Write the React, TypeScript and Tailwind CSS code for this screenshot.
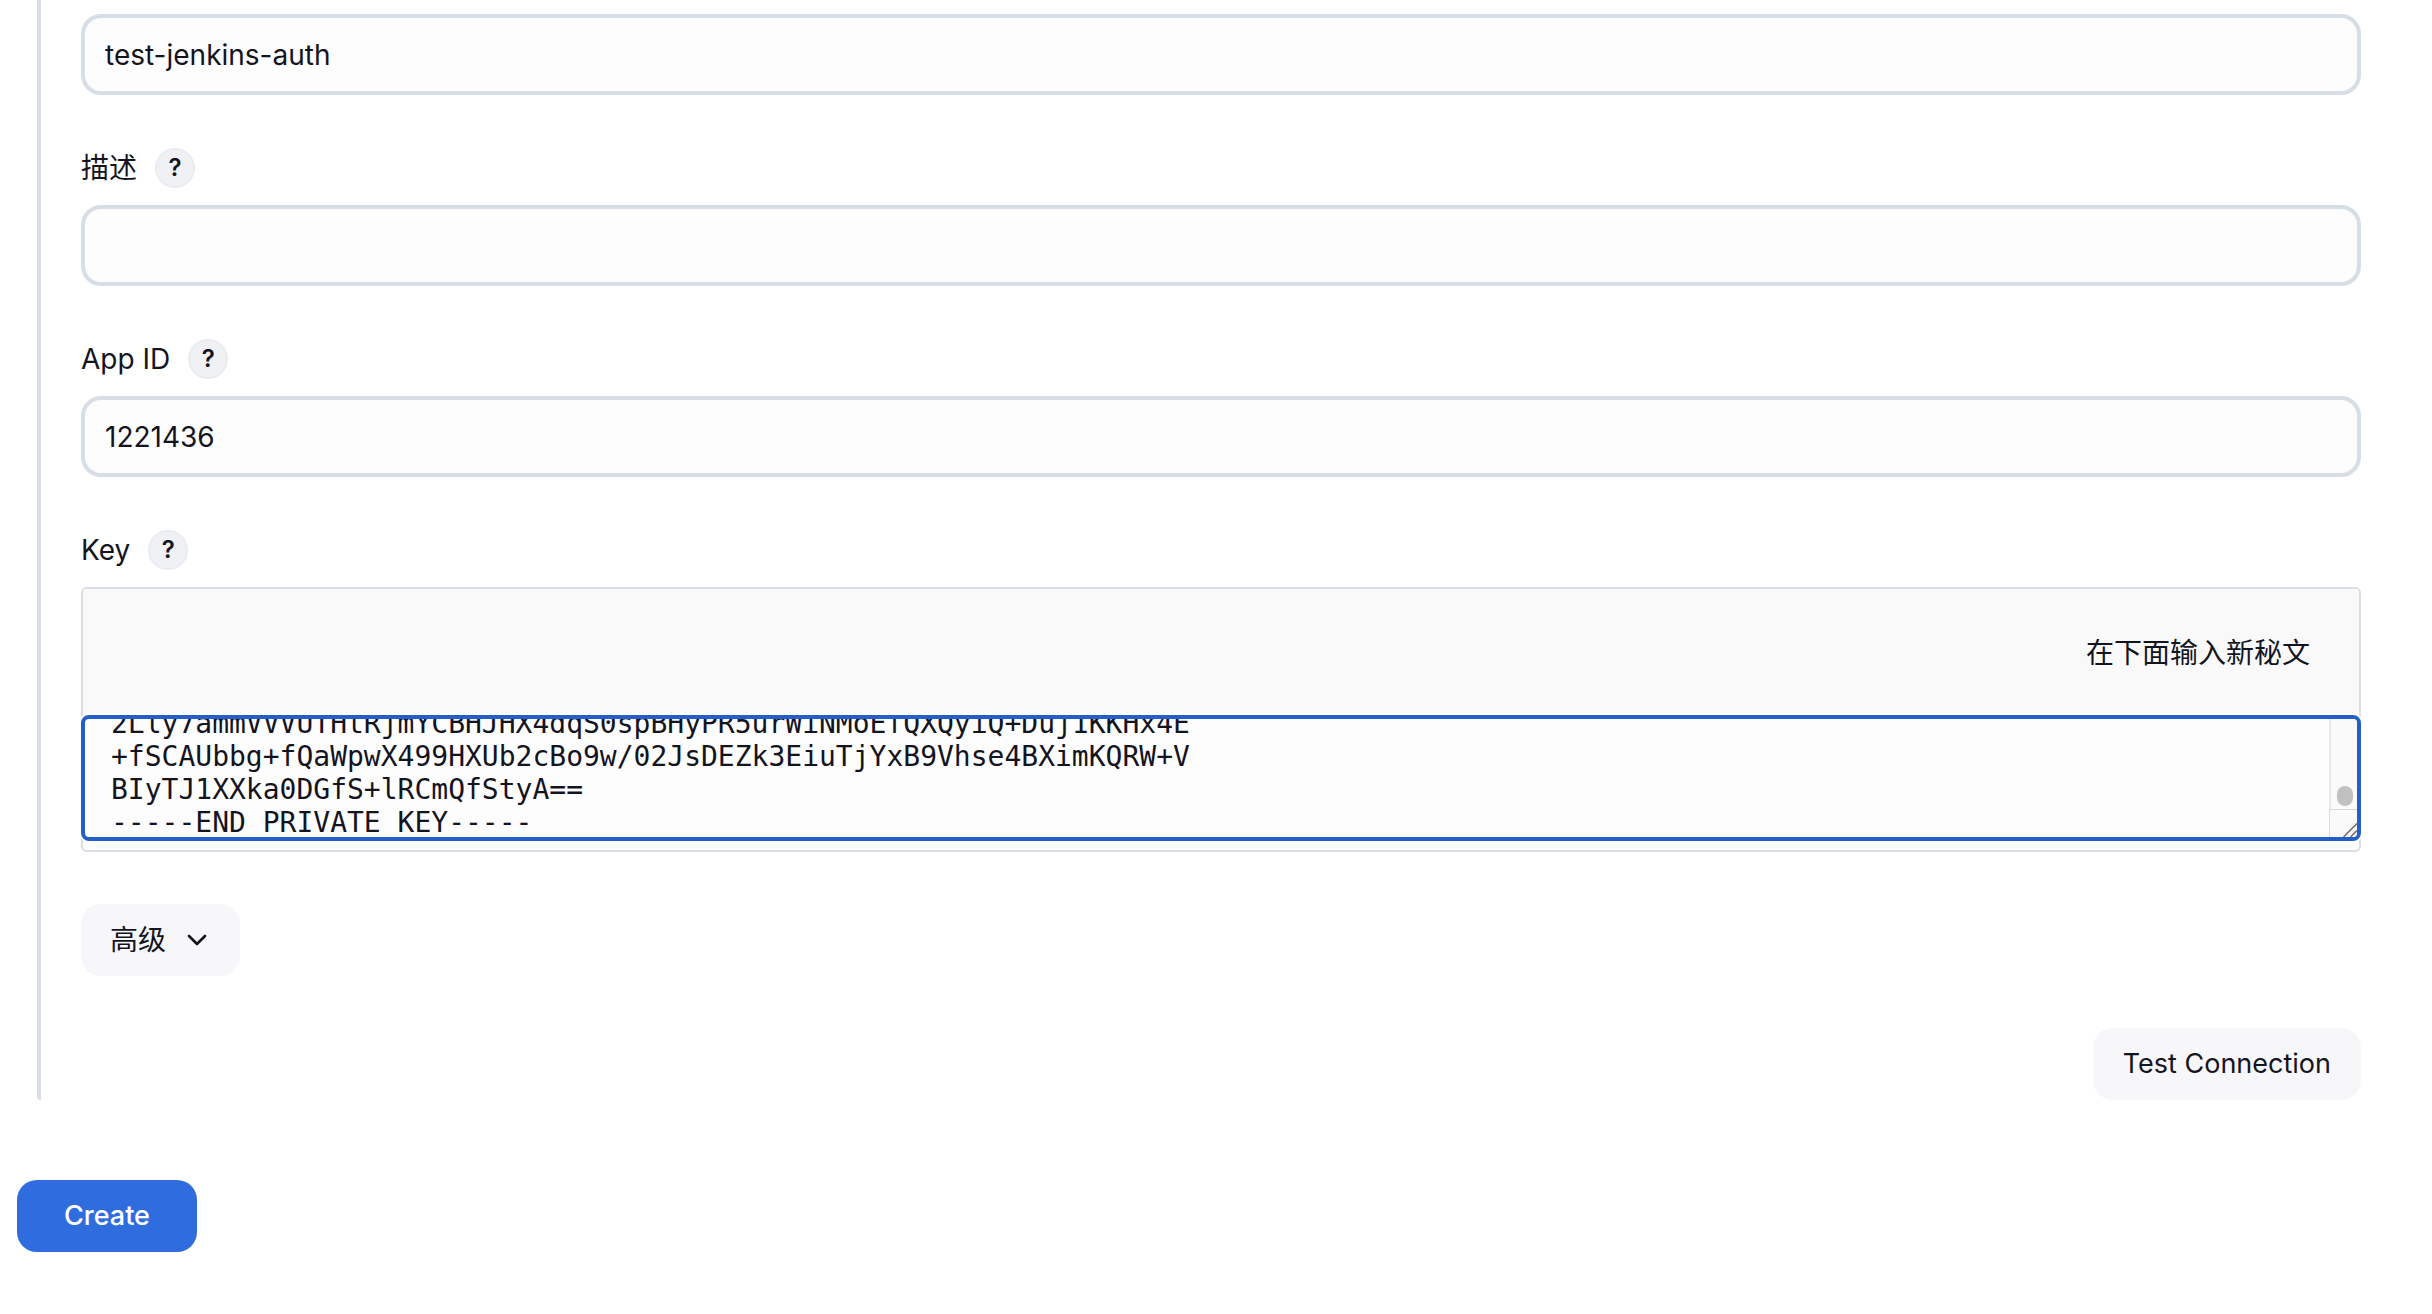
import React, { useEffect, useRef, useState } from 'react';

const PRIVATE_KEY = [
  '2Lly7ammVVVUTHtRjmYCBHJHX4dqS0spBHyPR5urWiNMoEfQXQyiQ+Duj1KKHx4E',
  '+fSCAUbbg+fQaWpwX499HXUb2cBo9w/02JsDEZk3EiuTjYxB9Vhse4BXimKQRW+V',
  'BIyTJ1XXka0DGfS+lRCmQfStyA==',
  '-----END PRIVATE KEY-----',
].join('\n');

interface FieldLabelProps {
  htmlFor: string;
  children: React.ReactNode;
}

const FieldLabel: React.FC<FieldLabelProps> = ({ htmlFor, children }) => (
  <div className="flex items-center gap-[18px] mb-[17px]">
    <label htmlFor={htmlFor}>{children}</label>
    <button
      type="button"
      aria-label="Help"
      className="size-10 rounded-full border-2 border-[#e9ecf1] bg-[#f0f1f5] flex items-center justify-center text-2xl leading-none font-semibold"
    >
      ?
    </button>
  </div>
);

interface TextFieldProps {
  id: string;
  label?: string;
  initialValue: string;
}

const TextField: React.FC<TextFieldProps> = ({ id, label, initialValue }) => {
  const [value, setValue] = useState(initialValue);

  return (
    <div>
      {label && <FieldLabel htmlFor={id}>{label}</FieldLabel>}
      <input
        id={id}
        type="text"
        aria-label={label ? undefined : 'ID'}
        value={value}
        onChange={(e) => setValue(e.target.value)}
        className="block w-full h-[81px] rounded-[20px] border-4 border-[#d8dee6] bg-[#fdfdfd] px-5 outline-none focus:border-[#265ec9]"
      />
    </div>
  );
};

const SecretField: React.FC = () => {
  const [value, setValue] = useState(PRIVATE_KEY);
  const textareaRef = useRef<HTMLTextAreaElement>(null);

  useEffect(() => {
    // Keep the end of the key in view
    if (textareaRef.current) {
      textareaRef.current.scrollTop = 12;
    }
  }, []);

  return (
    <div>
      <FieldLabel htmlFor="key">Key</FieldLabel>
      <div className="rounded-md border-2 border-[#d8dde6] pb-[9px]">
        <div className="h-[124px] bg-[#f9f9f9] rounded-t-sm flex items-center justify-end pt-1 pr-[49px]">
          在下面输入新秘文
        </div>
        {/* The frame covers the side borders of the box */}
        <div className="-mx-0.5 mt-0.5 flex h-[126px] overflow-hidden rounded-lg border-4 border-[#265ec9] bg-[#fdfdfd] ring-2 ring-white">
          <textarea
            id="key"
            ref={textareaRef}
            value={value}
            onChange={(e) => setValue(e.target.value)}
            spellCheck={false}
            className="min-w-0 flex-1 resize-none overflow-hidden bg-transparent pl-[26px] font-['DejaVu_Sans_Mono',monospace] leading-[33px] outline-none"
          />
          <div className="flex w-7 flex-col bg-[#fafafa]" aria-hidden="true">
            <div className="flex flex-1 items-end justify-end border-l-2 border-[#e8e8e8] pr-1 pb-[3px]">
              <div className="h-5 w-4 rounded-full bg-[#c1c1c1]" />
            </div>
            <div className="flex h-7 items-end justify-end border-t border-l border-[#d9d9d9]">
              <svg className="h-[14px] w-[14px]" viewBox="0 0 14 14" fill="none" stroke="#6b6b6b" strokeWidth="1.5">
                <path d="M0.5 14L14 0.5M7.5 14L14 7.5" />
              </svg>
            </div>
          </div>
        </div>
      </div>
    </div>
  );
};

export default function App() {
  return (
    <form
      onSubmit={(e) => e.preventDefault()}
      className="min-h-screen bg-white pl-[17px] pr-[71px] pb-[62px] font-[Inter,'Noto_Sans_CJK_SC',sans-serif] text-[28px] leading-10 text-[#14141f]"
    >
      <div className="ml-5 flex flex-col rounded-b-sm border-l-4 border-[#d9dde6] pt-[14px] pl-10">
        <div className="flex flex-col gap-[53px]">
          <TextField id="credential-id" initialValue="test-jenkins-auth" />
          <TextField id="description" label="描述" initialValue="" />
          <TextField id="app-id" label="App ID" initialValue="1221436" />
          <SecretField />
        </div>
        <button
          type="button"
          className="mt-[52px] flex h-[72px] items-center self-start rounded-[20px] bg-[#f7f7f9] px-[29px] gap-[17px]"
        >
          高级
          <svg className="size-7" viewBox="0 0 28 28" fill="none" stroke="currentColor" strokeWidth="2.6" strokeLinecap="round" strokeLinejoin="round">
            <path d="M6 10L14 18L22 10" />
          </svg>
        </button>
        <button type="button" className="mt-[52px] h-[72px] self-end rounded-[20px] bg-[#f7f7f9] px-[30px] text-[27px]">
          Test Connection
        </button>
      </div>
      <button type="submit" className="mt-20 h-[72px] rounded-[20px] bg-[#2f6ddf] px-[47px] text-[27px] font-medium text-white">
        Create
      </button>
    </form>
  );
}
